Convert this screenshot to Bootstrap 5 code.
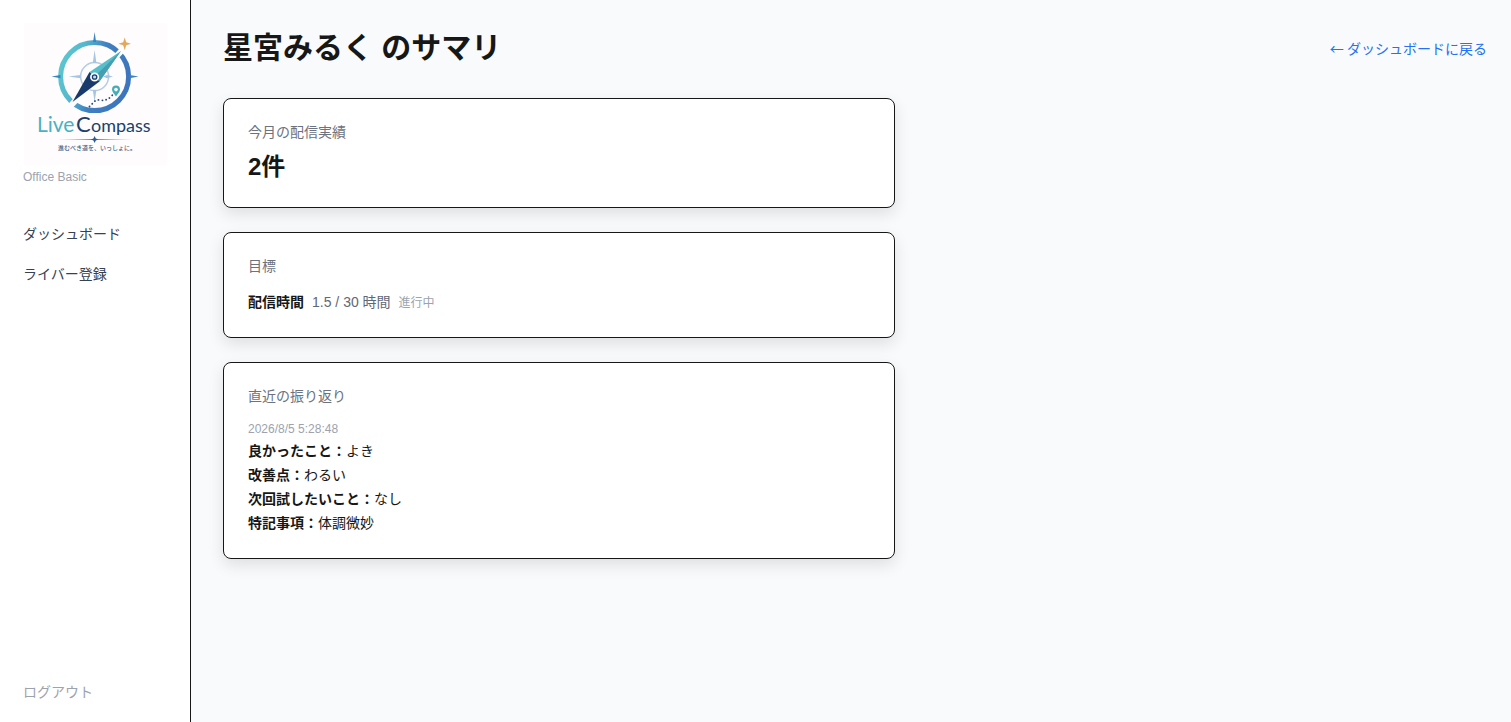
<!DOCTYPE html>
<html lang="ja">
<head>
<meta charset="utf-8">
<meta name="viewport" content="width=device-width, initial-scale=1">
<title>LiveCompass</title>
<link href="https://cdn.jsdelivr.net/npm/bootstrap@5.3.0/dist/css/bootstrap.min.css" rel="stylesheet">
<style>
  body { font-family: "Liberation Sans", "Noto Sans CJK JP", sans-serif; font-size: 14px; line-height: 24px; color: #171717; background: #f9fafb; }
  a { text-decoration: none; }
  .sidebar { width: 191px; padding: 22px 23px 18px; border-right: 1px solid #171717; }
  .logo { width: 144px; height: 144px; }
  .plan { font-size: 12px; line-height: 18px; margin-top: 2px; color: #9ca3af; }
  .side-nav { gap: 16px; margin-top: 36px; }
  .side-nav a { color: #374151; }
  .logout { color: #9ca3af; }
  .content { padding: 28px 24px 28px 32px; }
  .page-title { font-size: 30px; line-height: 40px; font-weight: 700; }
  .back { font-family: "Noto Sans CJK JP", sans-serif; line-height: 24px; color: #2570f5; }
  .panels { max-width: 672px; gap: 24px; margin-top: 30px; }
  .panel { padding: 24px 24px 23px; border: 1px solid #171717; border-radius: 8px; box-shadow: 0 6px 16px rgba(0, 0, 0, .11); }
  .panel h2 { font-size: 14px; line-height: 18px; font-weight: 400; color: #6b7280; margin-bottom: 15px; }
  .panel .tight { margin-bottom: 9px; }
  .count { font-size: 24px; line-height: 34px; }
  .amount { color: #5f6875; }
  .state { font-size: 12px; line-height: 18px; color: #9ca3af; }
  .stamp { font-size: 12px; line-height: 19px; color: #9ca3af; }
</style>
<script src="https://cdn.jsdelivr.net/npm/bootstrap@5.3.0/dist/js/bootstrap.bundle.min.js"></script>
</head>
<body>
<div class="d-flex min-vh-100">
  <aside class="sidebar bg-white d-flex flex-column flex-shrink-0">
    <svg class="logo d-block" viewBox="23 22 144 144" role="img" aria-label="LiveCompass">
      <defs>
        <linearGradient id="ring" x1="0" y1=".3" x2="1" y2=".6">
          <stop offset="0" stop-color="#5cc6d0"/><stop offset=".25" stop-color="#55b9cd"/><stop offset=".55" stop-color="#3f80c0"/><stop offset="1" stop-color="#3c74bd"/>
        </linearGradient>
        <linearGradient id="rule" x1="0" x2="1">
          <stop offset="0" stop-color="#9cb4cc" stop-opacity="0"/><stop offset=".5" stop-color="#4f7ba8"/><stop offset="1" stop-color="#9cb4cc" stop-opacity="0"/>
        </linearGradient>
      </defs>
      <rect x="24" y="23" width="143" height="142" fill="#fefcfd"/>
      <circle cx="94.600" cy="76.600" r="34" fill="none" stroke="url(#ring)" stroke-width="5"/>
      <path d="M94.600 32l1.500 10h-3zM51.500 76.600l9-1.600v3.200zM138.500 76.600l-9-1.600v3.200z" fill="#3e83bd"/>
      <circle cx="94.600" cy="76.600" r="14" fill="none" stroke="#b4cce4" stroke-width="1.500"/>
      <path d="M94.600 50l1.800 13h-3.600zM94.600 102l1.800-12h-3.600zM68.500 76.600l12-1.700v3.400zM113 76.600l-6-1.700-4 1.700 4 1.700z" fill="#a7c5df"/>
      <path d="M124.500 47.500L70 106.500" stroke="#fefcfd" stroke-width="6"/>
      <path d="M121 51L89.500 72l5 4.500 5 5z" fill="#57bfc9"/>
      <path d="M121 51L94.500 76.500l5 5z" fill="#439fb1"/>
      <path d="M72.500 102L89.500 72l10 9.500z" fill="#193a6b"/>
      <circle cx="94.600" cy="77" r="3.700" fill="#193a6b" stroke="#fff" stroke-width="1.700"/>
      <circle cx="94.600" cy="77" r="1.600" fill="#c5dbea"/>
      <path d="M124.700 37.500l1.500 4.800 4.800 1.500-4.800 1.500-1.500 4.900-1.500-4.900-4.800-1.500 4.800-1.500z" fill="#e3a75d"/>
      <path d="M89.500 106.500l5-5q2-2 5-1.500 8 1.500 13-5" fill="none" stroke="#254979" stroke-width="1.800" stroke-linecap="round" stroke-dasharray=".1 3.700"/>
      <path d="M116 96.500c-1.500-2.500-4-4.500-4-7a4 4 0 0 1 8 0c0 2.500-2.500 4.500-4 7z" fill="#45adb9"/>
      <circle cx="116" cy="89.600" r="1.800" fill="#fff"/>
      <g font-family="Lato, sans-serif" fill="#203f6b">
        <text x="37" y="132" font-size="21" fill="#48b2c3">Live</text>
        <text x="76" y="132" font-size="22">C</text>
        <text x="91" y="132" font-size="18">ompass</text>
      </g>
      <path d="M57 138.900h76v1H57z" fill="url(#rule)"/>
      <path d="M94.600 136l1.200 2.400 2.500 1-2.500 1-1.200 2.600-1.200-2.600-2.500-1 2.500-1z" fill="#2e5c8e"/>
      <text x="58" y="150" font-family="'Noto Sans CJK JP', sans-serif" font-size="6" font-weight="500" fill="#435f82">進むべき道を、いっしょに。</text>
    </svg>
    <div class="plan">Office Basic</div>
    <nav class="side-nav d-flex flex-column">
      <a href="#">ダッシュボード</a>
      <a href="#">ライバー登録</a>
    </nav>
    <button type="button" class="logout mt-auto border-0 bg-transparent p-0 text-start">ログアウト</button>
  </aside>
  <main class="content flex-grow-1">
    <header class="d-flex justify-content-between align-items-center">
      <h1 class="page-title mb-0">星宮みるく のサマリ</h1>
      <a class="back" href="#">← ダッシュボードに戻る</a>
    </header>
    <div class="panels d-flex flex-column">
      <section class="panel bg-white">
        <h2 class="tight">今月の配信実績</h2>
        <div class="count fw-bold">2件</div>
      </section>
      <section class="panel bg-white">
        <h2>目標</h2>
        <div class="d-flex align-items-baseline gap-2"><strong>配信時間</strong><span class="amount">1.5 / 30 時間</span><span class="state">進行中</span></div>
      </section>
      <section class="panel bg-white">
        <h2>直近の振り返り</h2>
        <div class="stamp">2026/8/5 5:28:48</div>
        <div><strong>良かったこと：</strong>よき</div>
        <div><strong>改善点：</strong>わるい</div>
        <div><strong>次回試したいこと：</strong>なし</div>
        <div><strong>特記事項：</strong>体調微妙</div>
      </section>
    </div>
  </main>
</div>
</body>
</html>
